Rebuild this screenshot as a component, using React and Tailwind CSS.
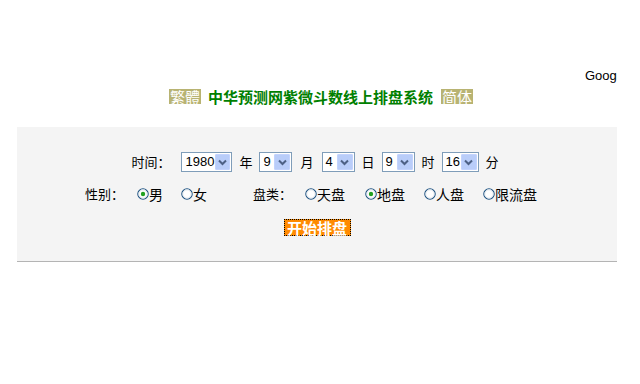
import { useState } from 'react'

const cjk = { fontFamily: '"Noto Sans CJK SC", "Liberation Sans", sans-serif' }

function Select({ value, width }) {
  return (
    <div
      className="flex h-[20px] items-stretch border border-[#7f9db9] bg-white"
      style={{ width }}
    >
      <span className="flex-1 pl-[3px] text-[13px] leading-[18px] text-black" style={{ fontFamily: '"Liberation Sans", sans-serif' }}>
        {value}
      </span>
      <span className="m-[1px] flex w-[16px] items-center justify-center rounded-[1px] border border-[#c3d3fd] bg-[#b9cdf9]">
        <svg width="9" height="7" viewBox="0 0 9 7">
          <path d="M1 1.5 L4.5 5 L8 1.5" fill="none" stroke="#4d6185" strokeWidth="2" />
        </svg>
      </span>
    </div>
  )
}

function Radio({ checked, label, className = '' }) {
  return (
    <label className={`flex items-center ${className}`}>
      <svg width="12" height="12" viewBox="0 0 12 12">
        <circle cx="6" cy="6" r="5.2" fill="#fff" stroke="#1c5180" strokeWidth="1.1" />
        <circle cx="6" cy="6" r="4.2" fill="none" stroke="#d6dde5" strokeWidth="0.8" />
        {checked && <circle cx="6" cy="6" r="2.2" fill="#21a121" />}
      </svg>
      <span className="text-[14px] leading-[16px] text-black">{label}</span>
    </label>
  )
}

export default function App() {
  const [sex] = useState('m')
  const [pan] = useState('di')

  return (
    <div className="h-[384px] w-[640px] bg-white" style={cjk}>
      <div className="h-[68px]" />
      <div
        className="h-[16px] w-[617px] overflow-hidden whitespace-nowrap pl-[585px] text-[13px] leading-[16px] text-black"
        style={{ fontFamily: '"Liberation Sans", sans-serif' }}
      >
        Google
      </div>

      {/* title */}
      <div className="mt-[5px] flex h-[15px] items-center pl-[169px]">
        <span className="flex h-[15px] w-[32px] items-center justify-center bg-[#b8b372] text-[15px] leading-[15px] text-white">
          繁體
        </span>
        <span className="ml-[7px] text-[15px] font-bold leading-[15px] text-[#008000]">
          中华预测网紫微斗数线上排盘系统
        </span>
        <span className="ml-[8px] flex h-[15px] w-[32px] items-center justify-center bg-[#b8b372] text-[15px] leading-[15px] text-white">
          简体
        </span>
      </div>

      {/* form panel */}
      <div className="ml-[17px] mt-[23px] flex h-[135px] w-[600px] flex-col items-center border-b border-[#b4b4b4] bg-[#f4f4f4] pt-[25px]">
        <div className="flex h-[20px] items-center pr-[4px] text-[13px] text-black">
          <span className="mr-[11px]">时间：</span>
          <Select value="1980" width={51} />
          <span className="mx-[7px]">年</span>
          <Select value="9" width={33} />
          <span className="mx-[8px]">月</span>
          <Select value="4" width={33} />
          <span className="mx-[7px]">日</span>
          <Select value="9" width={33} />
          <span className="mx-[7px]">时</span>
          <Select value="16" width={37} />
          <span className="ml-[7px]">分</span>
        </div>

        <div className="mt-[14px] flex h-[16px] items-center pr-[12px] text-[13px] text-black">
          <span>性别：</span>
          <Radio checked={sex === 'm'} label="男" className="ml-[13px]" />
          <Radio checked={sex === 'f'} label="女" className="ml-[18px]" />
          <span className="ml-[46px]">盘类：</span>
          <Radio checked={pan === 'tian'} label="天盘" className="ml-[13px]" />
          <Radio checked={pan === 'di'} label="地盘" className="ml-[20px]" />
          <Radio checked={pan === 'ren'} label="人盘" className="ml-[19px]" />
          <Radio checked={pan === 'xian'} label="限流盘" className="ml-[19px]" />
        </div>

        <button className="mt-[17px] flex h-[17px] w-[67px] items-center justify-center border border-dotted border-black bg-[#ff8a00] text-[15px] font-bold leading-[15px] text-white">
          开始排盘
        </button>
      </div>
    </div>
  )
}
